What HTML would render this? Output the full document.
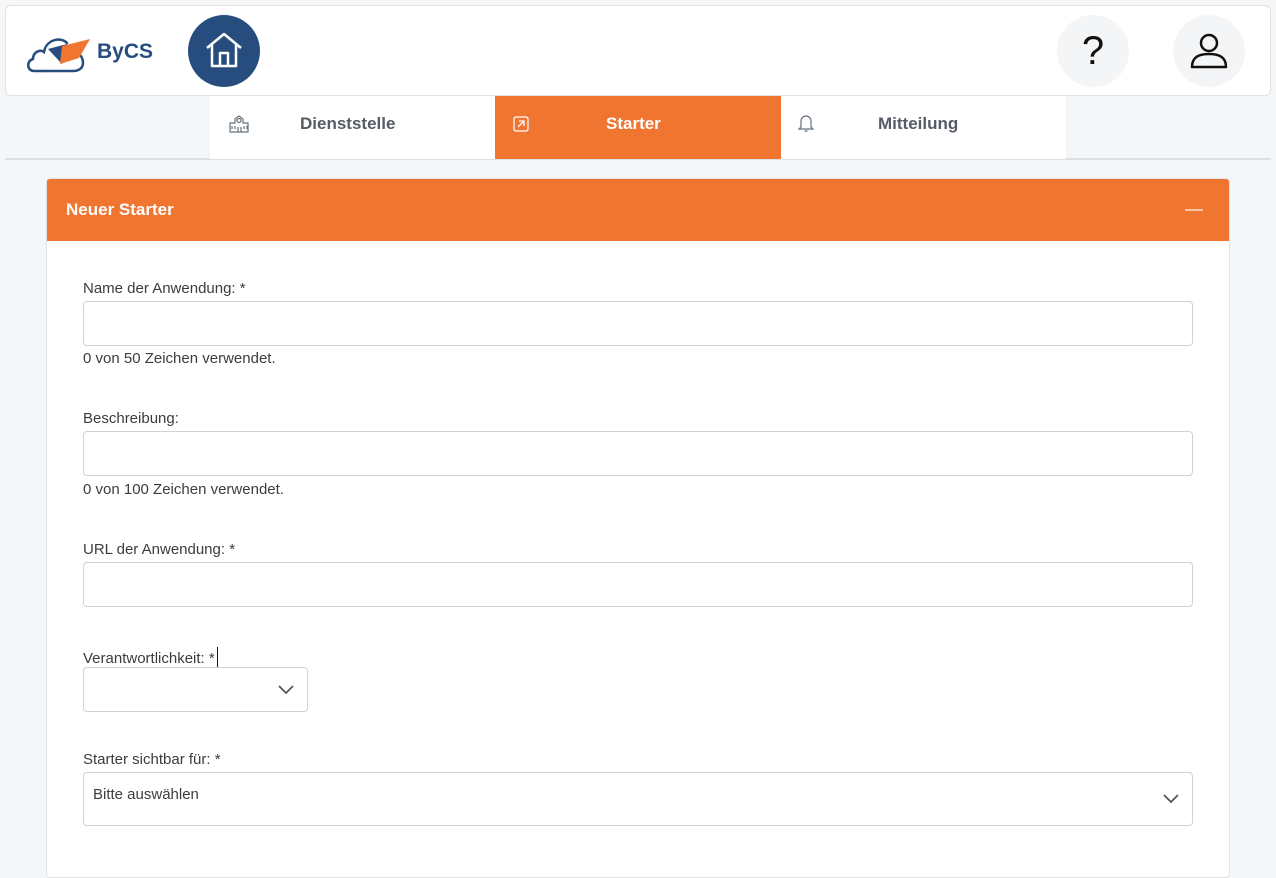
<!DOCTYPE html>
<html><head><meta charset="utf-8"><style>
*{box-sizing:border-box;margin:0;padding:0}
body{width:1276px;height:845px;background:#f5f6f8;font-family:"Liberation Sans",sans-serif;overflow:hidden;position:relative;color:#3c3c3c}
.hdr{position:absolute;left:5px;top:5px;width:1266px;height:91px;background:#fff;border:1px solid #dfe1e4;border-radius:6px}
.home{position:absolute;left:188px;top:15px;width:72px;height:72px;border-radius:50%;background:#264d7e}
.circ{position:absolute;top:15px;width:72px;height:72px;border-radius:50%;background:#f4f5f7}
.line{position:absolute;left:5px;top:158px;width:1266px;height:2px;background:#dcdfe3}
.tab{position:absolute;top:96px;height:63px;background:#fff;font-weight:bold;font-size:17px;color:#555c66}
.tab span{position:absolute;top:18px}
.panel{position:absolute;left:46px;top:178px;width:1184px;height:700px;background:#fff;border:1px solid #e0e2e5;border-radius:4px;overflow:hidden}
.ph{height:62px;background:#ef7530;color:#fff;font-weight:bold;font-size:17px;padding:21px 19px}
.lbl{position:absolute;left:83px;font-size:15px;color:#3c3c3c}
.inp{position:absolute;left:83px;width:1110px;height:45px;border:1px solid #cfd2d6;border-radius:4px;background:#fff}
.cnt{position:absolute;left:83px;font-size:15px;color:#3c3c3c}
</style></head><body>
<div class="hdr"></div>
<svg style="position:absolute;left:25px;top:30px" width="70" height="45" viewBox="0 0 70 45">
<path d="M20 41 H9 C2 41 1 31 8 29 C8 22 15 19 19 22 C21 10 35 6 42 13" fill="none" stroke="#264d7e" stroke-width="2.5" stroke-linecap="round"/>
<path d="M53 24 C58 26 59 33 57 37 C55 40 52 41 48 41 H20" fill="none" stroke="#264d7e" stroke-width="2.5" stroke-linecap="round"/>
<polygon points="23,19 42,14 37,34" fill="#264d7e"/>
<polygon points="37,16 65,9 54,28 35,34" fill="#ef7530"/>
</svg>
<div style="position:absolute;left:97px;top:40px;font-weight:bold;font-size:21px;color:#264d7e">ByCS</div>
<div class="home"></div>
<svg style="position:absolute;left:203px;top:31px" width="42" height="38" viewBox="0 0 42 38">
<path d="M4 17 L21 3 L38 17 M9 13 V35 H33 V13 M17 35 V22 H25 V35" fill="none" stroke="#fff" stroke-width="2.5" stroke-linejoin="round"/>
</svg>
<div class="circ" style="left:1057px"></div>
<div style="position:absolute;left:1057px;top:29px;width:72px;text-align:center;font-size:40px;color:#111">?</div>
<div class="circ" style="left:1173px"></div>
<svg style="position:absolute;left:1189px;top:30px" width="40" height="40" viewBox="0 0 40 40">
<circle cx="20" cy="13" r="8" fill="none" stroke="#111" stroke-width="2.5"/>
<path d="M3 37 C3 27 10 24 20 24 C30 24 37 27 37 37 Z" fill="none" stroke="#111" stroke-width="2.5" stroke-linejoin="round"/>
</svg>
<div class="line"></div>
<div class="tab" style="left:210px;width:285px"><svg style="position:absolute;left:18px;top:19px" width="22" height="18" viewBox="0 0 22 18"><path d="M2 17V8H7V4L11 1L15 4V8H20V17ZM11 3.5a2 2 0 1 0 .01 0M4 11v3M7 11v3M10 12v5M13 12v5M16 11v3M19 11v3" fill="none" stroke="#66707c" stroke-width="1.2"/></svg><span style="left:90px">Dienststelle</span></div>
<div class="tab" style="left:495px;width:286px;background:#ef7530;color:#fff"><svg style="position:absolute;left:18px;top:20px" width="16" height="16" viewBox="0 0 16 16"><rect x="1" y="1" width="14" height="14" rx="2" fill="none" stroke="#fff" stroke-width="1.3"/><path d="M5 11L11 5M6 5H11V10" fill="none" stroke="#fff" stroke-width="1.3"/></svg><span style="left:111px">Starter</span></div>
<div class="tab" style="left:781px;width:285px"><svg style="position:absolute;left:17px;top:17px" width="16" height="20" viewBox="0 0 16 20"><path d="M3 14V8a5 5 0 0 1 10 0V14L15 16H1Z M6.5 18h3" fill="none" stroke="#66707c" stroke-width="1.2"/></svg><span style="left:97px">Mitteilung</span></div>
<div class="panel"><div class="ph">Neuer Starter</div></div>
<div style="position:absolute;left:1185px;top:209px;width:18px;height:1.5px;background:#f8c4a1"></div>
<div class="lbl" style="top:280px">Name der Anwendung: *</div>
<div class="inp" style="top:301px"></div>
<div class="cnt" style="top:350px">0 von 50 Zeichen verwendet.</div>
<div class="lbl" style="top:410px">Beschreibung:</div>
<div class="inp" style="top:431px"></div>
<div class="cnt" style="top:481px">0 von 100 Zeichen verwendet.</div>
<div class="lbl" style="top:541px">URL der Anwendung: *</div>
<div class="inp" style="top:562px"></div>
<div class="lbl" style="top:647px">Verantwortlichkeit: *<span style="display:inline-block;width:1px;height:20px;background:#111;vertical-align:-4px;margin-left:2px"></span></div>
<div class="inp" style="top:667px;width:225px"></div>
<svg style="position:absolute;left:277px;top:684px" width="18" height="12" viewBox="0 0 18 12"><path d="M2 2L9 9L16 2" fill="none" stroke="#555" stroke-width="1.8"/></svg>
<div class="lbl" style="top:751px">Starter sichtbar für: *</div>
<div class="inp" style="top:772px;height:54px"></div>
<div class="lbl" style="left:93px;top:786px">Bitte auswählen</div>
<svg style="position:absolute;left:1162px;top:793px" width="18" height="12" viewBox="0 0 18 12"><path d="M2 2L9 9L16 2" fill="none" stroke="#555" stroke-width="1.8"/></svg>
</body></html>
